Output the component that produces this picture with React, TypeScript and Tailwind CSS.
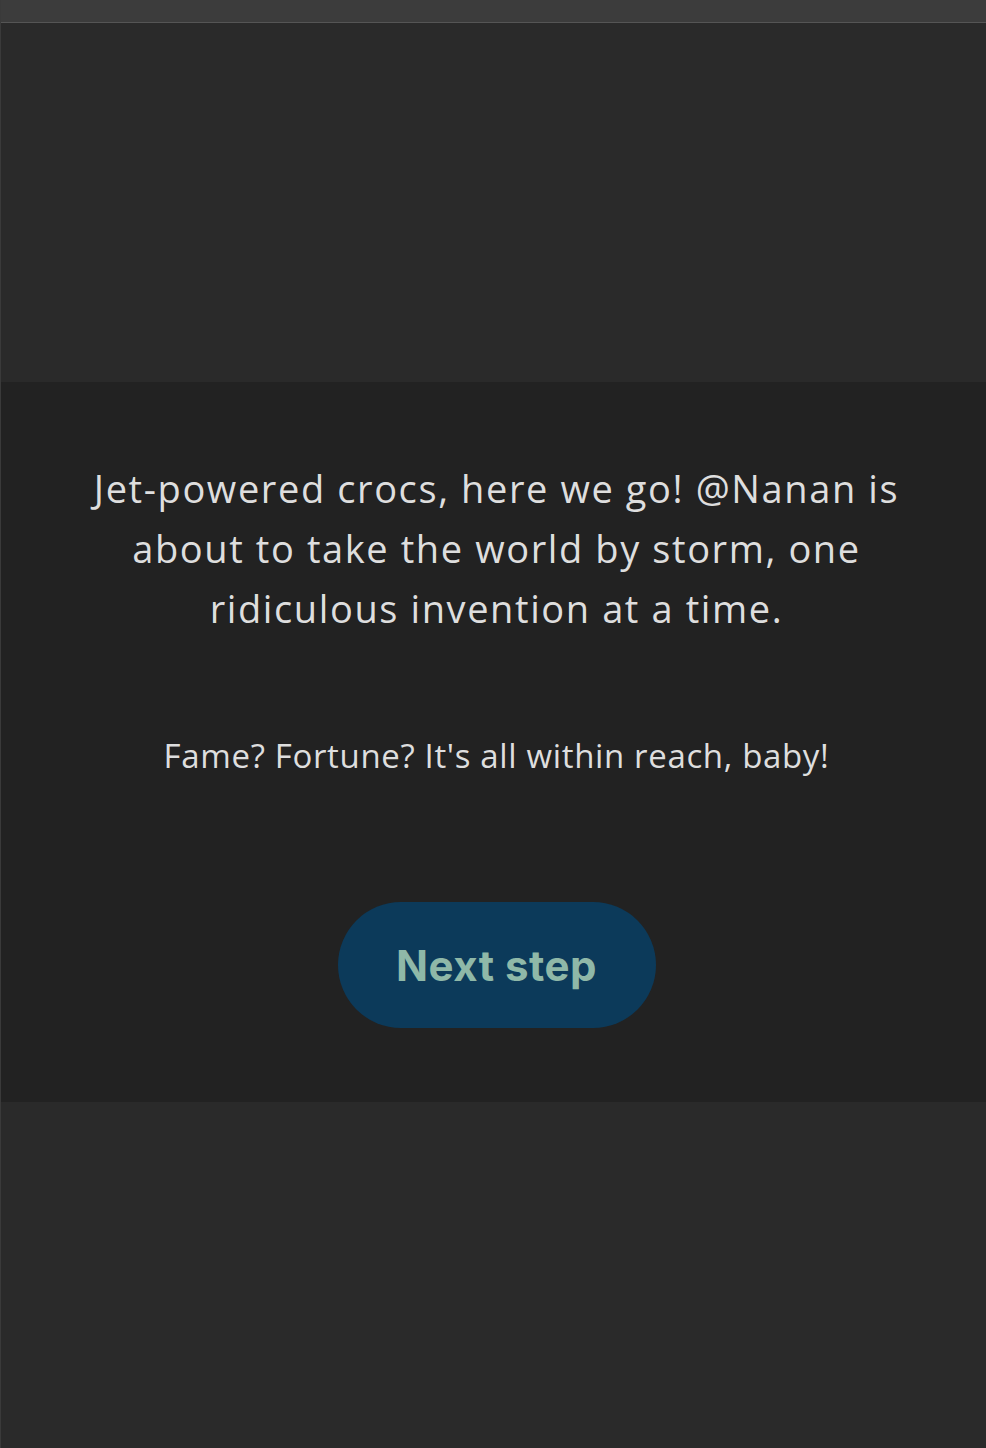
import React from 'react';

const App: React.FC = () => {
  return (
    <div className="min-h-[1448px] w-full bg-[#2a2a2a] border-l border-[#3a3a3a] flex flex-col" style={{ fontFamily: '"Open Sans", Lato, sans-serif' }}>
      <div className="h-[23px] bg-[#3c3c3c] border-b border-[#555555] shrink-0" />
      <div className="h-[359px] shrink-0" />
      <section className="h-[720px] bg-[#222222] flex flex-col items-center pt-[76px] pl-[6px] shrink-0">
        <p className="w-[860px] text-center text-[38px] font-medium leading-[60px] tracking-[1.6px] text-[#dedede]">
          Jet-powered crocs, here we go! @Nanan is about to take the world by storm, one ridiculous invention at a time.
        </p>
        <p className="mt-[94px] text-center text-[33px] font-medium leading-[48px] tracking-[0.65px] text-[#dedede]">
          Fame? Fortune? It's all within reach, baby!
        </p>
        <button className="mt-[122px] w-[318px] h-[126px] rounded-full bg-[#0c3a5a] text-[#8fb8a8] text-[42px] font-bold tracking-[0.5px]" style={{ fontFamily: 'Inter, sans-serif' }}>
          Next step
        </button>
      </section>
      <div className="flex-1" />
    </div>
  );
};

export default App;
